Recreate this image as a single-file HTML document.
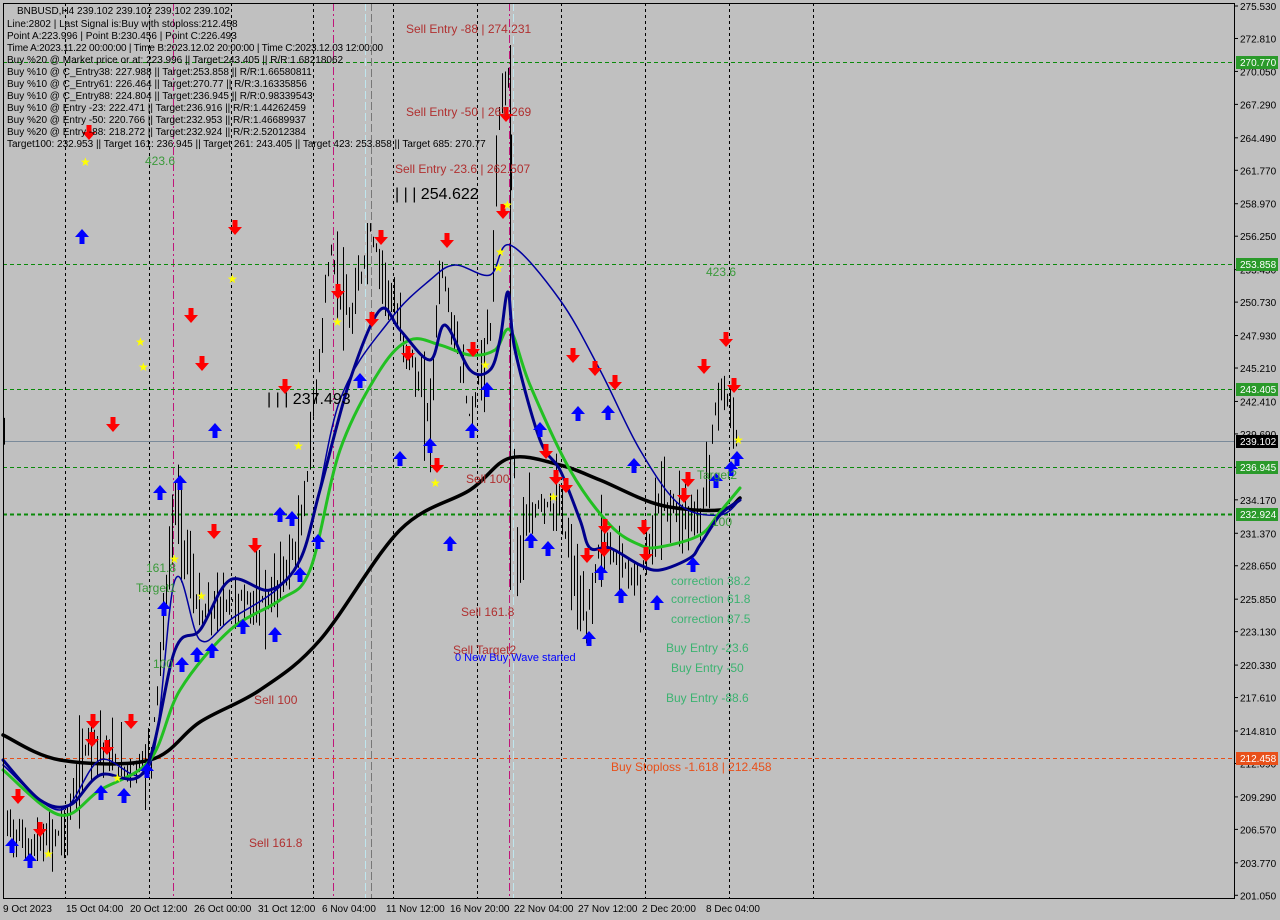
<!DOCTYPE html>
<html><head><meta charset="utf-8"><style>
html,body{margin:0;padding:0;background:#c0c0c0;width:1280px;height:920px;overflow:hidden}
svg{position:absolute;left:0;top:0}
text{font-family:"Liberation Sans",sans-serif}
</style></head><body>
<svg id="s" width="1280" height="920" viewBox="0 0 1280 920">
<rect x="0" y="0" width="1280" height="920" fill="#c0c0c0"/>
<g id="grid" stroke="#000" stroke-width="1" stroke-dasharray="3,3">
<line x1="65.5" y1="3" x2="65.5" y2="898"/><line x1="149.5" y1="3" x2="149.5" y2="898"/>
<line x1="231.5" y1="3" x2="231.5" y2="898"/><line x1="313.5" y1="3" x2="313.5" y2="898"/>
<line x1="393.5" y1="3" x2="393.5" y2="898"/><line x1="477.5" y1="3" x2="477.5" y2="898"/>
<line x1="561.5" y1="3" x2="561.5" y2="898"/><line x1="645.5" y1="3" x2="645.5" y2="898"/>
<line x1="729.5" y1="3" x2="729.5" y2="898"/><line x1="813.5" y1="3" x2="813.5" y2="898"/>
</g>
<g stroke="#c0157a" stroke-width="1" stroke-dasharray="8,3,2,3">
<line x1="173.5" y1="3" x2="173.5" y2="898"/><line x1="333.5" y1="3" x2="333.5" y2="898"/><line x1="509.5" y1="3" x2="509.5" y2="898"/>
</g>
<g stroke="#bfe6ee" stroke-width="1" stroke-dasharray="8,3">
<line x1="365.5" y1="3" x2="365.5" y2="898"/><line x1="513.5" y1="3" x2="513.5" y2="898"/>
</g>
<line x1="371.5" y1="3" x2="371.5" y2="898" stroke="#777" stroke-dasharray="8,3"/>
<g stroke="#0a8a0a" stroke-dasharray="4,3">
<line x1="3" y1="62.5" x2="1234" y2="62.5"/><line x1="3" y1="264.5" x2="1234" y2="264.5"/>
<line x1="3" y1="389.5" x2="1234" y2="389.5"/><line x1="3" y1="467.5" x2="1234" y2="467.5"/>
<line x1="3" y1="514.5" x2="1234" y2="514.5" stroke-width="2"/>
</g>
<line x1="3" y1="758.5" x2="1234" y2="758.5" stroke="#e8501a" stroke-dasharray="4,3"/>
<line x1="3" y1="441.5" x2="1234" y2="441.5" stroke="#7a8a9a"/>
<g id="bars" stroke="#000" stroke-width="1"></g>
<g id="lines" fill="none" stroke-linejoin="round" stroke-linecap="round"></g>
<g id="marks"></g>
<g font-size="12" fill="#b03030">
<text x="406" y="33">Sell Entry -88 | 274.231</text>
<text x="406" y="116">Sell Entry -50 | 267.269</text>
<text x="395" y="173">Sell Entry -23.6 | 262.507</text>
<text x="466" y="483">Sell 100</text>
<text x="461" y="616">Sell 161.8</text>
<text x="453" y="654">Sell Target2</text>
<text x="254" y="704">Sell 100</text>
<text x="249" y="847">Sell 161.8</text>
</g>
<text x="455" y="661" font-size="11" fill="#0000ff">0 New Buy Wave started</text>
<text x="395" y="199" font-size="16" fill="#000">| | | 254.622</text>
<text x="267" y="404" font-size="16" fill="#000">| | | 237.493</text>
<g font-size="12" fill="#3a9a3a">
<text x="145" y="165">423.6</text><text x="706" y="276">423.6</text>
<text x="697" y="479">Target2</text><text x="712" y="526">100</text>
<text x="146" y="572">161.8</text><text x="136" y="592">Target1</text><text x="153" y="668">100</text>
</g>
<g font-size="12" fill="#3cb371">
<text x="671" y="585">correction 38.2</text><text x="671" y="603">correction 61.8</text><text x="671" y="623">correction 87.5</text>
<text x="666" y="652">Buy Entry -23.6</text><text x="671" y="672">Buy Entry -50</text><text x="666" y="702">Buy Entry -88.6</text>
</g>
<text x="611" y="771" font-size="12" fill="#e8501a">Buy Stoploss -1.618 | 212.458</text>
<g font-size="10" fill="#000">
<text x="17" y="14">BNBUSD,H4  239.102 239.102 239.102 239.102</text>
<text x="7" y="27">Line:2802 | Last Signal is:Buy with stoploss:212.458</text>
<text x="7" y="39">Point A:223.996 | Point B:230.456 | Point C:226.493</text>
<text x="7" y="51" textLength="376">Time A:2023.11.22 00:00:00 | Time B:2023.12.02 20:00:00 | Time C:2023.12.03 12:00:00</text>
<text x="7" y="63">Buy %20 @ Market price or at: 223.996 || Target:243.405 || R/R:1.68218062</text>
<text x="7" y="75">Buy %10 @ C_Entry38: 227.988 || Target:253.858 || R/R:1.66580811</text>
<text x="7" y="87">Buy %10 @ C_Entry61: 226.464 || Target:270.77 || R/R:3.16335856</text>
<text x="7" y="99">Buy %10 @ C_Entry88: 224.804 || Target:236.945 || R/R:0.98339543</text>
<text x="7" y="111">Buy %10 @ Entry -23: 222.471 || Target:236.916 || R/R:1.44262459</text>
<text x="7" y="123">Buy %20 @ Entry -50: 220.766 || Target:232.953 || R/R:1.46689937</text>
<text x="7" y="135">Buy %20 @ Entry -88: 218.272 || Target:232.924 || R/R:2.52012384</text>
<text x="7" y="147">Target100: 232.953 || Target 161: 236.945 || Target 261: 243.405 || Target 423: 253.858 || Target 685: 270.77</text>
</g>
<rect x="3.5" y="3.5" width="1231" height="895" fill="none" stroke="#000"/>
<g id="axis" font-size="10" fill="#000"></g>
<g font-size="10" fill="#000">
<text x="3" y="912">9 Oct 2023</text><text x="66" y="912">15 Oct 04:00</text><text x="130" y="912">20 Oct 12:00</text>
<text x="194" y="912">26 Oct 00:00</text><text x="258" y="912">31 Oct 12:00</text><text x="322" y="912">6 Nov 04:00</text>
<text x="386" y="912">11 Nov 12:00</text><text x="450" y="912">16 Nov 20:00</text><text x="514" y="912">22 Nov 04:00</text>
<text x="578" y="912">27 Nov 12:00</text><text x="642" y="912">2 Dec 20:00</text><text x="706" y="912">8 Dec 04:00</text>
</g>
</svg>
<script>
var NS="http://www.w3.org/2000/svg",s=document.getElementById('s');
function el(t,a,p){var e=document.createElementNS(NS,t);for(var k in a)e.setAttribute(k,a[k]);(p||s).appendChild(e);return e;}
var ax=document.getElementById('axis');
function Y(p){return 6+(275.53-p)*11.94;}
var ticks=[275.53,272.81,270.05,267.29,264.49,261.77,258.97,256.25,253.45,250.73,247.93,245.21,242.41,239.69,236.89,234.17,231.37,228.65,225.85,223.13,220.33,217.61,214.81,212.09,209.29,206.57,203.77,201.05];
ticks.forEach(function(p){var y=Y(p);el('line',{x1:1234,x2:1238,y1:y,y2:y,stroke:'#000'},ax);var t=el('text',{x:1240,y:y+4},ax);t.textContent=p.toFixed(3);});
function lab(y,txt,bg,fg){el('rect',{x:1236,y:y-6,width:42,height:13,fill:bg},ax);var t=el('text',{x:1240,y:y+4,fill:fg},ax);t.textContent=txt;}
lab(62,'270.770','#2a9a2a','#fff');lab(264,'253.858','#2a9a2a','#fff');lab(389,'243.405','#2a9a2a','#fff');
lab(441,'239.102','#000','#fff');lab(467,'236.945','#2a9a2a','#fff');lab(514,'232.924','#2a9a2a','#fff');lab(758,'212.458','#e8501a','#fff');
var path=[[5,820],[30,850],[65,830],[90,730],[120,770],[150,760],[175,500],[200,620],[230,600],[270,600],[300,540],[330,250],[350,330],[370,230],[400,330],[430,420],[440,260],[470,420],[490,330],[500,100],[510,60],[515,560],[540,500],[560,510],[585,630],[600,540],[640,580],[660,500],[700,520],[720,380],[737,440]];
function py(x){for(var i=0;i<path.length-1;i++){if(x>=path[i][0]&&x<=path[i+1][0]){var f=(x-path[i][0])/(path[i+1][0]-path[i][0]);return path[i][1]+f*(path[i+1][1]-path[i][1]);}}return 440;}
var b=document.getElementById('bars'),seed=7;function r(){seed=(seed*9301+49297)%233280;return seed/233280;}
for(var x=4;x<=738;x+=3){var y=py(x),h=15+r()*50;el('line',{x1:x+.5,x2:x+.5,y1:y-h*r(),y2:y+h*r()},b);}
el('line',{x1:510.5,x2:510.5,y1:45,y2:590,stroke:'#000'},b);
var L=document.getElementById('lines');
function smooth(pts){var d='M'+pts[0][0]+','+pts[0][1];for(var i=0;i<pts.length-1;i++){var p0=pts[i-1]||pts[i],p1=pts[i],p2=pts[i+1],p3=pts[i+2]||p2;
d+=' C'+(p1[0]+(p2[0]-p0[0])/6)+','+(p1[1]+(p2[1]-p0[1])/6)+' '+(p2[0]-(p3[0]-p1[0])/6)+','+(p2[1]-(p3[1]-p1[1])/6)+' '+p2[0]+','+p2[1];}return d;}
function line(str,col,w){var pts=str.split(' ').map(function(q){return q.split(',').map(Number);});el('path',{d:smooth(pts),stroke:col,'stroke-width':w},L);}
line("3,735 60,760 150,760 200,722 260,690 320,640 400,530 470,490 510,458 560,465 600,480 660,505 720,510 740,498","#000",3.5);
line("3,765 60,810 100,760 150,765 175,580 200,640 230,620 300,560 340,400 390,320 430,280 455,265 490,275 510,245 560,300 600,370 640,450 680,505 720,515 740,500","#0000a0",1.5);
line("3,770 60,815 100,790 150,760 180,690 230,630 280,600 310,570 340,450 380,370 410,340 440,345 470,355 495,350 510,330 530,385 570,470 610,525 640,545 660,547 700,535 720,512 740,488","#22c022",3);
line("3,760 40,800 70,805 100,775 145,770 175,650 200,630 230,580 270,590 300,560 320,490 350,380 380,310 400,330 430,360 445,325 470,370 490,370 500,340 508,292 515,350 540,440 560,470 580,520 590,548 610,548 640,565 660,570 690,558 700,545 720,515 740,500","#00008b",3);
var m=document.getElementById('marks');
function down(x,y){el('path',{d:'M'+(x-2.5)+' '+(y-8)+'h5v7h4.5l-7,8l-7,-8h4.5z',fill:'#f00'},m);}
function up(x,y){el('path',{d:'M'+(x-2.5)+' '+(y+8)+'h5v-7h4.5l-7,-8l-7,8h4.5z',fill:'#0000ff'},m);}
function star(x,y){el('text',{x:x-5,y:y+4,'font-size':'12',fill:'#ff0'},m).textContent='★';}
[[89,133],[235,228],[191,316],[202,364],[113,425],[285,387],[381,238],[447,241],[338,292],[372,320],[408,354],[437,466],[473,350],[506,115],[503,212],[573,356],[595,369],[615,383],[644,528],[684,496],[704,367],[726,340],[734,386],[93,722],[107,748],[131,722],[255,546],[214,532],[92,740],[18,797],[40,830],[546,452],[556,478],[566,486],[587,556],[604,550],[646,555],[688,480],[605,527]].forEach(function(p){down(p[0],p[1]);});
[[82,236],[160,492],[180,482],[164,608],[182,664],[197,654],[212,650],[243,626],[275,634],[280,514],[292,518],[300,574],[318,541],[400,458],[430,445],[450,543],[472,430],[487,389],[540,429],[531,540],[548,548],[578,413],[608,412],[589,638],[601,572],[621,595],[657,602],[716,480],[737,458],[731,468],[147,770],[124,795],[101,792],[12,845],[30,860],[215,430],[360,380],[634,465],[693,564]].forEach(function(p){up(p[0],p[1]);});
[[85,162],[232,279],[140,342],[143,367],[298,446],[337,322],[507,205],[500,252],[498,268],[435,483],[553,497],[201,596],[174,559],[48,854],[117,778],[738,440],[485,365]].forEach(function(p){star(p[0],p[1]);});
</script>
</body></html>
